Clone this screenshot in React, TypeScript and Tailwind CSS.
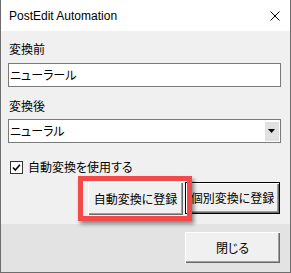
import React from "react";

const jp = "font-['Noto_Sans_CJK_JP',sans-serif] [font-feature-settings:'palt'] text-[12px] text-black";

function WinButton({ label, className }: { label: string; className: string }) {
  return (
    <div
      className={`flex items-center justify-center bg-[#f0f0f0] shadow-[inset_1px_1px_#ffffff,inset_-1px_-1px_#696969,inset_-2px_-2px_#a0a0a0] ${jp} ${className}`}
    >
      <span className="leading-[16px]">{label}</span>
    </div>
  );
}

export default function App() {
  return (
    <div className="relative w-[291px] h-[273px] flex flex-col border-x border-b border-[#6d6d6d] bg-[#f0f0f0] overflow-hidden">
      {/* Title bar */}
      <div className="h-[31px] shrink-0 bg-white flex items-center justify-between pl-[8px] pr-[10px]">
        <span className="font-['Liberation_Sans',sans-serif] text-[12px] text-black leading-[16px]">PostEdit Automation</span>
        <svg width="10" height="10" viewBox="0 0 10 10">
          <path d="M0.5 0.5L9.5 9.5M9.5 0.5L0.5 9.5" stroke="#000" strokeWidth="1" fill="none" />
        </svg>
      </div>

      {/* Body */}
      <div className="h-[193px] shrink-0 flex flex-col pl-[7px] pt-[10px]">
        <div className={`h-[16px] leading-[16px] pl-[1px] ${jp}`}>変換前</div>
        <div className={`mt-[6px] w-[273px] h-[24px] bg-white border border-[#7a7a7a] flex items-center pl-[1px] ${jp}`}>
          <span className="leading-[16px]">ニューラール</span>
        </div>

        <div className={`mt-[11px] h-[16px] leading-[16px] pl-[1px] ${jp}`}>変換後</div>
        <div className={`mt-[5px] w-[273px] h-[24px] bg-white border border-[#7a7a7a] flex items-center pl-[1px] pr-[1px] ${jp}`}>
          <span className="flex-1 leading-[16px]">ニューラル</span>
          <div className="w-[15px] h-[20px] bg-[#e1e1e1] shadow-[inset_1px_1px_#ffffff] flex items-center justify-center">
            <svg width="7" height="4" viewBox="0 0 7 4">
              <path d="M0 0H7L3.5 4Z" fill="#000" />
            </svg>
          </div>
        </div>

        <div className="mt-[16px] h-[16px] flex items-center pl-[2px]">
          <div className="w-[13px] h-[13px] bg-white border border-[#333333] flex items-center justify-center">
            <svg width="11" height="11" viewBox="0 0 11 11">
              <path d="M2 5.5L4.3 8L9 2.8" stroke="#000" strokeWidth="1.6" fill="none" />
            </svg>
          </div>
          <span className={`ml-[5px] leading-[16px] ${jp}`}>自動変換を使用する</span>
        </div>

        <div className="mt-[7px] flex items-start">
          <WinButton label="自動変換に登録" className="ml-[80px] w-[95px] h-[33px]" />
          <div className="ml-[2px] w-[95px] h-[32px] border border-black">
            <WinButton label="個別変換に登録" className="w-full h-full" />
          </div>
        </div>
      </div>

      {/* Bottom panel */}
      <div className="flex-1 bg-[#e3e3e3] pt-[8px]">
        <WinButton label="閉じる" className="ml-[184px] w-[95px] h-[31px]" />
      </div>

      {/* Red highlight annotation */}
      <div className="absolute left-[77px] top-[176px] w-[114px] h-[45px] border-[5px] border-[#f24a4a] shadow-[2px_3px_4px_rgba(0,0,0,0.45)]" />
    </div>
  );
}
